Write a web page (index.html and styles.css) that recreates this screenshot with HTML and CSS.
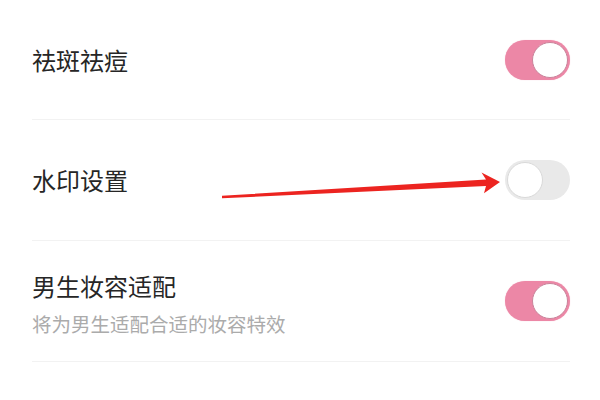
FILE: index.html
```html
<!DOCTYPE html>
<html lang="zh-CN">
<head>
<meta charset="utf-8">
<link rel="stylesheet" href="styles.css">
</head>
<body>
<div class="list">
  <div class="row">
    <div class="text"><div class="title">祛斑祛痘</div></div>
    <div class="switch on"><div class="knob"></div></div>
  </div>
  <div class="row">
    <div class="text"><div class="title">水印设置</div></div>
    <div class="switch off"><div class="knob"></div></div>
  </div>
  <div class="row">
    <div class="text two"><div class="title">男生妆容适配</div><div class="sub">将为男生适配合适的妆容特效</div></div>
    <div class="switch on"><div class="knob"></div></div>
  </div>
</div>
<svg class="arrow" width="600" height="400" viewBox="0 0 600 400">
  <polygon points="222,195.8 486,179.6 481.5,172.5 500,182 484,193.2 486,186 222,198.2" fill="#ec2420"/>
</svg>
</body>
</html>
```
FILE: styles.css
```css
html, body {
  margin: 0;
  padding: 0;
  background: #ffffff;
  width: 600px;
  height: 400px;
  overflow: hidden;
  font-family: "Noto Sans CJK SC", "Noto Sans", sans-serif;
}
.list {
  padding: 0 30px 0 32px;
}
.row {
  height: 120px;
  border-bottom: 1px solid #f2f2f2;
  display: flex;
  align-items: center;
  justify-content: space-between;
}
.row:first-child {
  height: 119px;
}
.text.two {
  padding-top: 7px;
}
.title {
  font-size: 24px;
  line-height: 32px;
  color: #262626;
}
.sub {
  margin-top: 7px;
  font-size: 19.5px;
  line-height: 30px;
  color: #ababab;
}
.switch {
  width: 65px;
  height: 40px;
  border-radius: 20px;
  box-sizing: border-box;
  padding: 2px;
  display: flex;
  align-items: center;
}
.switch.on {
  background: #ec87a6;
  justify-content: flex-end;
  box-shadow: 0 0 1px #f3b6c8;
}
.switch.off {
  background: #e9e9e9;
  justify-content: flex-start;
}
.knob {
  width: 36px;
  height: 36px;
  border-radius: 50%;
  background: #ffffff;
  box-sizing: border-box;
}
.switch.on .knob {
  border: 1.5px solid #c9839a;
}
.switch.off .knob {
  border: 1.5px solid #d9d9d9;
}
.arrow {
  position: absolute;
  left: 0;
  top: 0;
}
```
